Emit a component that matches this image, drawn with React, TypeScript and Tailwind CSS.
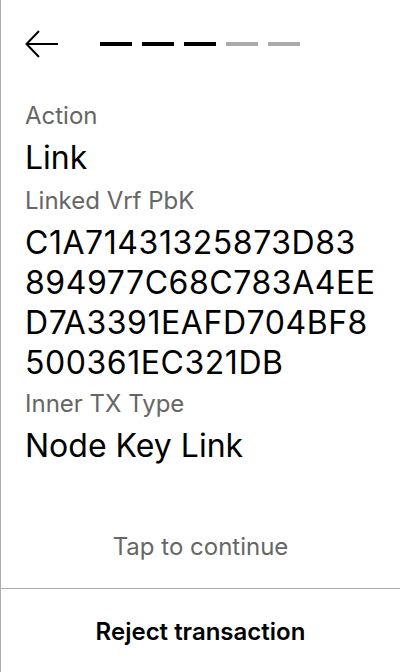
import React from "react";

export default function App() {
  const font = { fontFamily: "Inter, 'Noto Sans', sans-serif" };
  return (
    <div style={font} className="h-[672px] w-[400px] bg-white border-l border-[#acacac] flex flex-col">
      <div className="h-[87px] shrink-0 flex items-center pl-[24px]">
        <svg width="34" height="30" viewBox="0 0 34 30" className="shrink-0">
          <path d="M14 2 L1.5 15 L14 28 M1.5 15 L33 15" fill="none" stroke="#000" strokeWidth="2" />
        </svg>
        <div className="ml-[41px] flex gap-[10px]">
          <div className="w-[32px] h-[4px] bg-black" />
          <div className="w-[32px] h-[4px] bg-black" />
          <div className="w-[32px] h-[4px] bg-black" />
          <div className="w-[32px] h-[4px] bg-[#aaaaaa]" />
          <div className="w-[32px] h-[4px] bg-[#aaaaaa]" />
        </div>
      </div>
      <div className="px-[24px] pt-[13px] flex flex-col">
        <div className="text-[24px] leading-[32px] text-[#666666]">Action</div>
        <div className="mt-[6px] text-[32px] leading-[40px] text-black">Link</div>
        <div className="mt-[7px] text-[24px] leading-[32px] text-[#666666]">Linked Vrf PbK</div>
        <div className="mt-[6px] text-[32px] leading-[40px] text-black tracking-[0.55px]">
          <div>C1A71431325873D83</div>
          <div>894977C68C783A4EE</div>
          <div>D7A3391EAFD704BF8</div>
          <div>500361EC321DB</div>
        </div>
        <div className="mt-[5px] text-[24px] leading-[32px] text-[#666666]">Inner TX Type</div>
        <div className="mt-[6px] text-[32px] leading-[40px] text-black">Node Key Link</div>
      </div>
      <div className="flex-1" />
      <div className="text-center text-[24px] leading-[32px] text-[#666666] pb-[25px]">Tap to continue</div>
      <div className="border-t border-[#acacac] h-[84px] shrink-0 flex items-center justify-center pt-[3px]">
        <span className="text-[24px] font-semibold text-black">Reject transaction</span>
      </div>
    </div>
  );
}
